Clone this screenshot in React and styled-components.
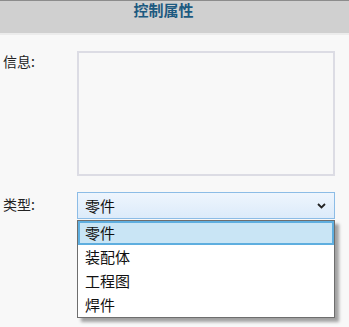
import React from "react";
import styled, { createGlobalStyle } from "styled-components";

const GlobalStyle = createGlobalStyle`
  html, body {
    margin: 0;
    padding: 0;
    background: #f8f8f8;
    font-family: "Noto Sans CJK SC", "Noto Sans", sans-serif;
  }
`;

const Panel = styled.div`
  width: 349px;
  height: 327px;
  background: #f8f8f8;
  overflow: hidden;
`;

const Header = styled.div`
  height: 32px;
  border-top: 1px solid #8c8c8c;
  border-bottom: 2px solid #ececec;
  background: #d0d0d0;
  padding-right: 22px;
  text-align: center;
`;

const Title = styled.h2`
  margin: 0;
  font-size: 15px;
  line-height: 18px;
  font-weight: 700;
  color: #1d5a80;
`;

const Body = styled.div`
  display: flex;
  flex-direction: column;
  gap: 16px;
  padding: 16px 0 0 3px;
`;

const Row = styled.div`
  display: grid;
  grid-template-columns: 74px 258px;
  align-items: ${(p) => (p.center ? "center" : "start")};
`;

const Label = styled.span`
  font-size: 14px;
  line-height: 20px;
  color: #222;
  margin-top: ${(p) => p.offset || "0"};
`;

const InfoBox = styled.div`
  height: 121px;
  border: 2px solid #dcdce4;
  background: #f8f8f8;
`;

const SelectWrap = styled.div`
  position: relative;
`;

const SelectBox = styled.div`
  height: 25px;
  border: 1px solid #8cbce6;
  background: linear-gradient(#eef5fd, #dcebfa);
  display: flex;
  align-items: center;
  justify-content: space-between;
  padding: 0 8px 0 7px;
  font-size: 15px;
  color: #111;
`;

const Menu = styled.ul`
  position: absolute;
  top: 28px;
  left: 0;
  width: 256px;
  margin: 0;
  padding: 0;
  list-style: none;
  background: #fff;
  border: 1px solid #6e6e6e;
  box-shadow: 4px 4px 3px rgba(0, 0, 0, 0.35);
`;

const Item = styled.li`
  height: ${(p) => (p.active ? "20px" : "24px")};
  line-height: ${(p) => (p.active ? "20px" : "24px")};
  padding-left: ${(p) => (p.active ? "5px" : "7px")};
  font-size: 15px;
  color: #111;
  background: ${(p) => (p.active ? "#c9e5f5" : "transparent")};
  border: ${(p) => (p.active ? "2px solid #5eaedf" : "none")};
`;

const Chevron = () => (
  <svg width="9" height="6" viewBox="0 0 9 6">
    <path d="M1 1l3.5 3.5L8 1" fill="none" stroke="#222" strokeWidth="1.8" />
  </svg>
);

const options = ["零件", "装配体", "工程图", "焊件"];

export default function App() {
  return (
    <>
      <GlobalStyle />
      <Panel>
        <Header>
          <Title>控制属性</Title>
        </Header>
        <Body>
          <Row>
            <Label>信息:</Label>
            <InfoBox />
          </Row>
          <Row center>
            <Label offset="-3px">类型:</Label>
            <SelectWrap>
              <SelectBox>
                <span>零件</span>
                <Chevron />
              </SelectBox>
              <Menu>
                {options.map((o, i) => (
                  <Item key={o} active={i === 0}>
                    {o}
                  </Item>
                ))}
              </Menu>
            </SelectWrap>
          </Row>
        </Body>
      </Panel>
    </>
  );
}
